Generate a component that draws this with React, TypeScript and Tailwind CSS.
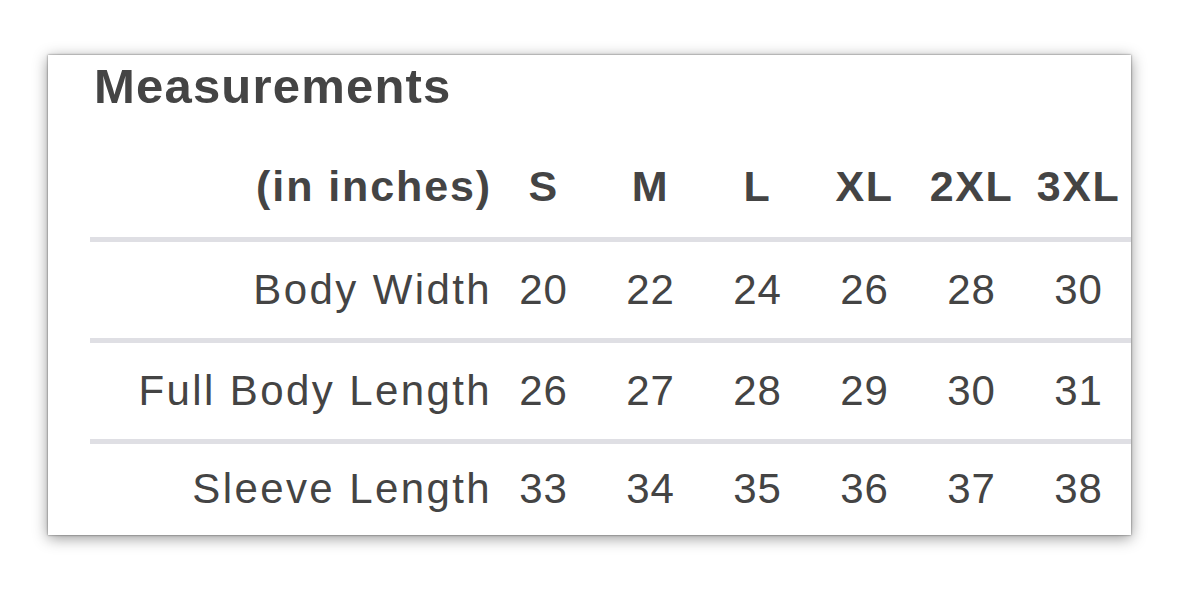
const sizes = ['S', 'M', 'L', 'XL', '2XL', '3XL'];

const rows = [
  { label: 'Body Width', values: [20, 22, 24, 26, 28, 30] },
  { label: 'Full Body Length', values: [26, 27, 28, 29, 30, 31] },
  { label: 'Sleeve Length', values: [33, 34, 35, 36, 37, 38] },
];

const App = () => {
  return (
    <div className="w-[1179px] h-[597px] bg-white pt-[55px] pl-[48px] font-['Liberation_Sans',Arial,sans-serif] text-[#444444]">
      <div className="w-[1083px] h-[480px] bg-white overflow-hidden pt-[3px] pl-[42px] shadow-[0_0_2px_rgba(0,0,0,0.55),0_3px_14px_rgba(0,0,0,0.42)]">
        <h1 className="pl-[4px] text-[49px] leading-[56px] font-bold tracking-[1.2px]">Measurements</h1>

        <div className="grid grid-cols-[400px_repeat(6,107px)] h-[123px] items-end pb-[23px] text-[43px] leading-[56px] font-bold">
          <div className="text-right tracking-[1.9px] -mr-[2px]">(in inches)</div>
          {sizes.map((size) => (
            <div key={size} className="text-center tracking-[1.5px]">
              {size}
            </div>
          ))}
        </div>

        {rows.map((row, i) => (
          <div
            key={row.label}
            className={`grid grid-cols-[400px_repeat(6,107px)] items-center border-t-[5px] border-[#dfdfe4] text-[42px] leading-[56px] ${
              i === rows.length - 1 ? 'h-[95px]' : 'h-[101px]'
            }`}
          >
            <div className="text-right tracking-[2.4px] -mr-[2px]">{row.label}</div>
            {row.values.map((v) => (
              <div key={v} className="text-center tracking-[1px]">
                {v}
              </div>
            ))}
          </div>
        ))}
      </div>
    </div>
  );
};

export default App;
